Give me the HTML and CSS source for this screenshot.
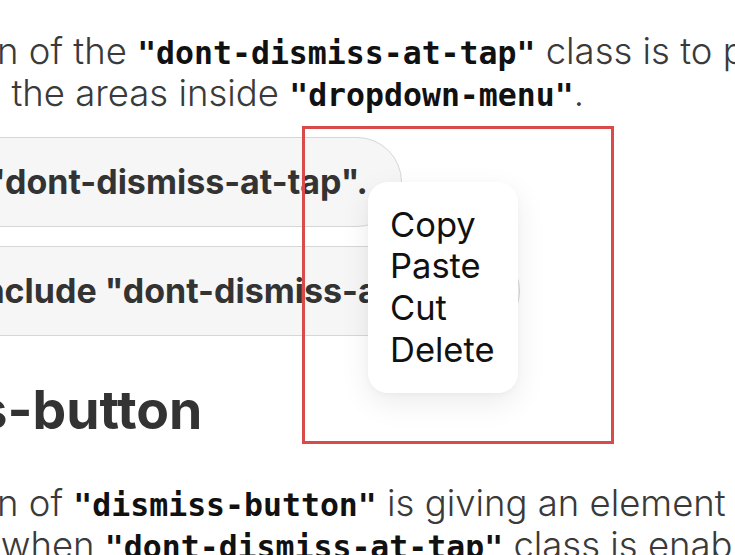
FILE: index.html
```html
<!DOCTYPE html>
<html lang="en">
<head>
<meta charset="utf-8">
<title>Dropdown classes</title>
<link rel="stylesheet" href="styles.css">
</head>
<body>
<main class="doc">
  <p class="para">The function of the <code>"dont-dismiss-at-tap"</code> class is to prevent the menu from closing<br>by pressing the areas inside <code>"dropdown-menu"</code>.</p>
  <div class="demo">
    <button class="pill" type="button">Includes "dont-dismiss-at-tap".</button>
    <button class="pill" type="button">Doesn't include "dont-dismiss-at-tap".</button>
  </div>
  <h2 class="title">dismiss-button</h2>
  <p class="para para-next">The function of <code>"dismiss-button"</code> is giving an element ability to close the<br>panel even when <code>"dont-dismiss-at-tap"</code> class is enabled.</p>
</main>

<div class="highlight"></div>
<ul class="menu">
  <li>Copy</li>
  <li>Paste</li>
  <li>Cut</li>
  <li>Delete</li>
</ul>
</body>
</html>
```

FILE: styles.css
```css
html, body {
  margin: 0;
  padding: 0;
  background: #ffffff;
}

body {
  width: 735px;
  height: 555px;
  overflow: hidden;
  position: relative;
  font-family: "Inter", "Noto Sans", sans-serif;
}

/* article column, scrolled so its left part runs past the viewport */
.doc {
  margin-left: -196px;
  padding-top: 30px;
  white-space: nowrap;
}

.para {
  margin: 0;
  font-size: 36.5px;
  font-weight: 300;
  line-height: 42px;
  color: #3a3a3a;
}

.para code {
  font-family: "DejaVu Sans Mono", "Liberation Mono", monospace;
  font-weight: 700;
  font-size: 31.5px;
  line-height: 1;
  color: #111111;
}

.para-next {
  margin-top: 39px;
}

.demo {
  display: flex;
  flex-direction: column;
  align-items: flex-start;
  gap: 19px;
  margin-top: 23px;
}

.pill {
  box-sizing: border-box;
  height: 90px;
  display: inline-flex;
  align-items: center;
  padding: 0 33px 0 32px;
  border: 1.5px solid #d6d6d6;
  border-radius: 45px;
  background: #f6f6f6;
  font-family: "Inter", "Noto Sans", sans-serif;
  font-size: 34px;
  font-weight: 700;
  line-height: 40px;
  color: #333333;
  white-space: nowrap;
}

.title {
  margin: 42.4px 0 0 2px;
  font-size: 53.5px;
  font-weight: 700;
  line-height: 64.2px;
  color: #333333;
}

/* red focus outline around the context menu */
.highlight {
  position: absolute;
  left: 302px;
  top: 126px;
  width: 312px;
  height: 318px;
  box-sizing: border-box;
  border: 3px solid #d94a4a;
}

.menu {
  position: absolute;
  left: 368px;
  top: 182px;
  width: 150px;
  height: 211px;
  box-sizing: border-box;
  margin: 0;
  padding: 21.5px 0 0 22px;
  list-style: none;
  background: #ffffff;
  border-radius: 20px;
  box-shadow: 0 10px 30px rgba(0, 0, 0, 0.08), 0 2px 6px rgba(0, 0, 0, 0.03);
  font-size: 34.5px;
  font-weight: 400;
  line-height: 41.7px;
  color: #111111;
}
```
